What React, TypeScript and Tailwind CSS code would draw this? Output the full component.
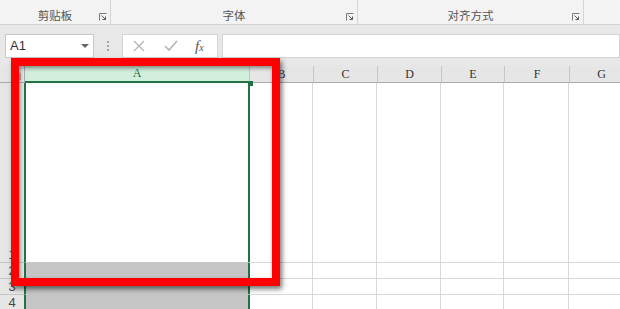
import React from 'react'

const cols = [
  { name: 'A', w: 225 },
  { name: 'B', w: 64 },
  { name: 'C', w: 64 },
  { name: 'D', w: 64 },
  { name: 'E', w: 63 },
  { name: 'F', w: 65 },
  { name: 'G', w: 64 },
]

const rows = [
  { n: '1', h: 180 },
  { n: '2', h: 16 },
  { n: '3', h: 16 },
  { n: '4', h: 16 },
]

function Launcher() {
  return (
    <svg width="8" height="8" viewBox="0 0 8 8" className="shrink-0">
      <path d="M0.5 7.5V0.5H7.5" fill="none" stroke="#7a7a7a" strokeWidth="1" />
      <path d="M2.5 2.5L6.5 6.5M6.5 3.5V6.5H3.5" fill="none" stroke="#5a5a5a" strokeWidth="1" />
    </svg>
  )
}

function RibbonGroup({ label, width }: { label: string; width: number }) {
  return (
    <div className="relative flex h-full items-end justify-center border-r border-[#d5d5d5] pb-[3px]" style={{ width }}>
      <span className="text-[11.5px] leading-none text-[#555]">{label}</span>
      <div className="absolute bottom-[3px] right-[3px]">
        <Launcher />
      </div>
    </div>
  )
}

export default function App() {
  return (
    <div
      className="relative h-[309px] w-[620px] overflow-hidden bg-white"
      style={{ fontFamily: '"Microsoft YaHei", "Noto Sans CJK SC", sans-serif' }}
    >
      {/* ribbon */}
      <div className="flex h-[25px] border-b border-[#d2d2d2] bg-[#f3f3f3]">
        <RibbonGroup label="剪贴板" width={111} />
        <RibbonGroup label="字体" width={247} />
        <RibbonGroup label="对齐方式" width={226} />
      </div>

      {/* formula bar */}
      <div className="flex h-[41px] items-start bg-[#e8e8e8] pt-[9px] pl-[5px]">
        <div className="flex h-[24px] w-[89px] items-center justify-between border border-[#c9c9c9] bg-white pl-[4px] pr-[4px]">
          <span className="text-[13px] text-[#333]" style={{ fontFamily: '"Liberation Sans", sans-serif' }}>A1</span>
          <svg width="8" height="5" viewBox="0 0 8 5"><path d="M0 0H8L4 4Z" fill="#666" /></svg>
        </div>
        <div className="flex h-[24px] w-[28px] flex-col items-center justify-center gap-[2px]">
          <span className="h-[2px] w-[2px] bg-[#a6a6a6]" />
          <span className="h-[2px] w-[2px] bg-[#a6a6a6]" />
          <span className="h-[2px] w-[2px] bg-[#a6a6a6]" />
        </div>
        <div className="flex h-[24px] w-[96px] items-center border border-[#d4d4d4] bg-white">
          <svg width="12" height="12" viewBox="0 0 12 12" className="ml-[10px]">
            <path d="M1 1L11 11M11 1L1 11" stroke="#b5b5b5" strokeWidth="1.3" />
          </svg>
          <svg width="14" height="12" viewBox="0 0 14 12" className="ml-[19px]">
            <path d="M1 6L5 10L13 1" fill="none" stroke="#b5b5b5" strokeWidth="1.6" />
          </svg>
          <span className="ml-[17px] text-[15px] italic leading-none text-[#555]" style={{ fontFamily: '"Liberation Serif", serif' }}>
            f<span className="text-[10px]">x</span>
          </span>
        </div>
        <div className="ml-[4px] h-[24px] flex-1 border border-[#d4d4d4] bg-white" />
      </div>

      {/* sheet */}
      <div style={{ fontFamily: '"Liberation Serif", "DejaVu Serif", serif' }}>
        <div className="flex h-[17px] bg-[#e6e6e6]">
          <div className="relative w-[25px] shrink-0 border-r border-b border-[#ababab]">
            <svg width="8" height="8" viewBox="0 0 8 8" className="absolute bottom-[2px] right-[3px]">
              <path d="M8 0V8H0Z" fill="#b4b4b4" />
            </svg>
          </div>
          {cols.map((c) =>
            c.name === 'A' ? (
              <div
                key={c.name}
                className="flex shrink-0 items-end justify-center border-r border-[#c6c6c6] border-b-2 border-b-[#217346] bg-[#d2eedd] text-[12px] leading-[15px] text-[#217346]"
                style={{ width: c.w }}
              >
                {c.name}
              </div>
            ) : (
              <div
                key={c.name}
                className="flex shrink-0 items-end justify-center border-r border-b border-[#c6c6c6] border-b-[#ababab] text-[12px] leading-[15px] text-[#333]"
                style={{ width: c.w }}
              >
                {c.name}
              </div>
            )
          )}
        </div>
        {rows.map((r, ri) => (
          <div key={r.n} className="flex" style={{ height: r.h }}>
            <div className="flex w-[25px] shrink-0 items-end justify-center border-r border-b border-[#c6c6c6] bg-[#e6e6e6] text-[13px] leading-[15px] text-[#444]" style={{ fontFamily: '"Liberation Sans", sans-serif' }}>
              {r.n}
            </div>
            {cols.map((c) =>
              c.name === 'A' ? (
                <div
                  key={c.name}
                  className={`shrink-0 border-x-2 border-x-[#217346] border-b border-b-[#c6c6c6] ${ri === 0 ? 'bg-white' : 'bg-[#c6c6c6]'}`}
                  style={{ width: c.w + 1, marginLeft: -1 }}
                />
              ) : (
                <div key={c.name} className="shrink-0 border-r border-b border-[#d9d9d9]" style={{ width: c.w, marginLeft: c.name === 'B' ? -1 : 0 }} />
              )
            )}
          </div>
        ))}
      </div>

      {/* selection handle */}
      <div className="absolute left-[248px] top-[81px] h-[5px] w-[5px] bg-[#217346]" />

      {/* red highlight box */}
      <div className="absolute left-[11px] top-[58px] h-[228px] w-[269px] border-[8px] border-[#ff0000] shadow-[2px_3px_5px_rgba(0,0,0,0.55),inset_1px_2px_4px_rgba(0,0,0,0.45)]" />
    </div>
  )
}
